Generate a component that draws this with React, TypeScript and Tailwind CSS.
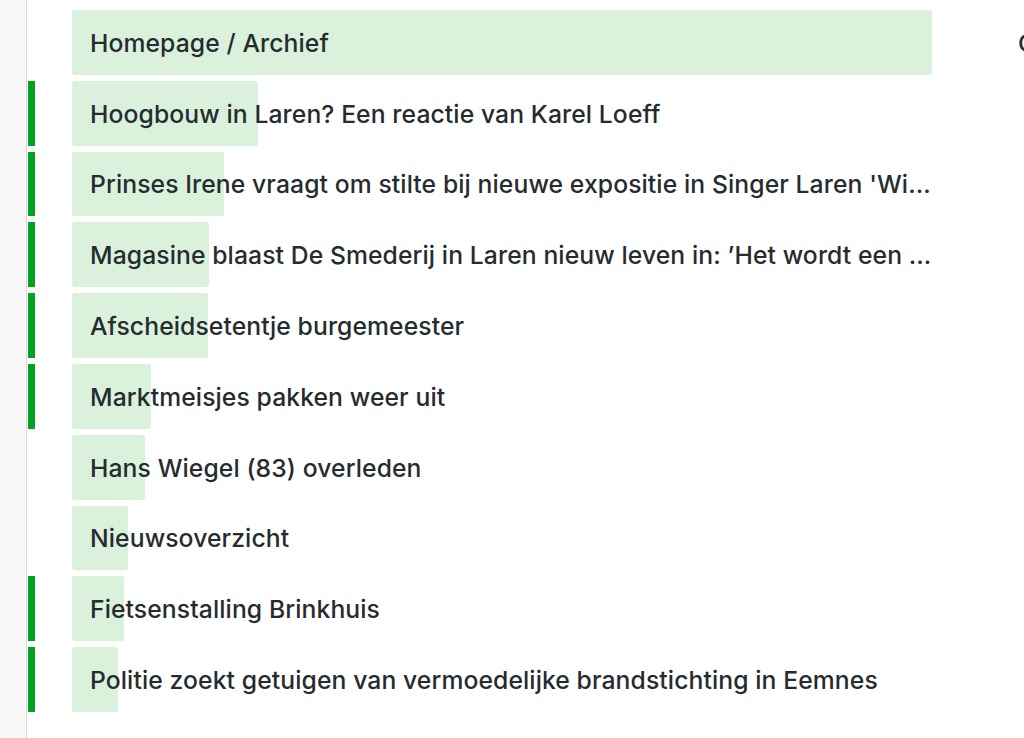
import React from "react";

const rows: { title: string; pct: number; bar: boolean }[] = [
  { title: "Homepage / Archief", pct: 860, bar: false },
  { title: "Hoogbouw in Laren? Een reactie van Karel Loeff", pct: 186, bar: true },
  { title: "Prinses Irene vraagt om stilte bij nieuwe expositie in Singer Laren 'Wi…", pct: 152, bar: true },
  { title: "Magasine blaast De Smederij in Laren nieuw leven in: ’Het wordt een …", pct: 137, bar: true },
  { title: "Afscheidsetentje burgemeester", pct: 136, bar: true },
  { title: "Marktmeisjes pakken weer uit", pct: 79, bar: true },
  { title: "Hans Wiegel (83) overleden", pct: 73, bar: false },
  { title: "Nieuwsoverzicht", pct: 56, bar: false },
  { title: "Fietsenstalling Brinkhuis", pct: 52, bar: true },
  { title: "Politie zoekt getuigen van vermoedelijke brandstichting in Eemnes", pct: 46, bar: true },
];

export default function App() {
  return (
    <div
      className="w-[1024px] h-[738px] overflow-hidden bg-white flex"
      style={{ fontFamily: "Inter, 'Noto Sans', sans-serif" }}
    >
      <div className="w-[27px] shrink-0 bg-[#f7f7f7] border-r border-[#dcdcde]" />
      <div className="flex-1 flex pt-[10px]">
        <div className="flex flex-col gap-[6px]">
          {rows.map((r, i) => (
            <div key={i} className="flex h-[64.8px]">
              <div className="w-[8px] shrink-0 pl-[1px]">
                {r.bar && <div className="w-[7px] h-full bg-[#00a320]" />}
              </div>
              <div className="w-[37px] shrink-0" />
              <div className="relative w-[860px] h-full">
                <div
                  className="absolute left-0 top-0 h-full rounded-[3px] bg-[#daf1db]"
                  style={{ width: r.pct }}
                />
                <div className="relative h-full flex items-center pl-[18px] pr-0 pt-[1px]">
                  <span className="block whitespace-nowrap text-[24.7px] font-medium tracking-[0.1px] text-[#262b30] leading-[1.3]">
                    {r.title}
                  </span>
                </div>
              </div>
            </div>
          ))}
        </div>
        <div className="pl-[86px] h-[65px] flex items-center pt-[1px]">
          <span className="text-[24.7px] font-medium text-[#262b30] leading-[1.3] whitespace-nowrap">Count</span>
        </div>
      </div>
    </div>
  );
}
